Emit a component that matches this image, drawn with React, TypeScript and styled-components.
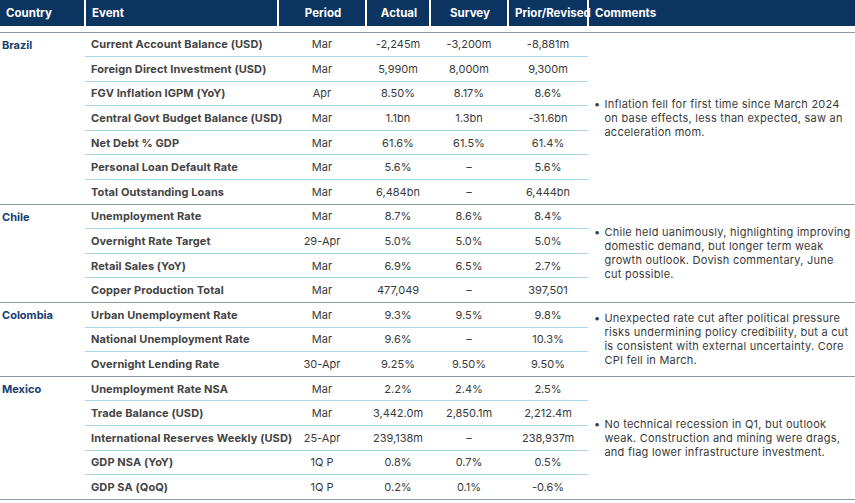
import React from "react";
import styled, { createGlobalStyle } from "styled-components";

const G = createGlobalStyle`
  body { margin: 0; background: #fff; font-family: Inter, "Noto Sans", sans-serif; }
`;

const Table = styled.table`
  width: 855px;
  border-collapse: collapse;
  table-layout: fixed;
  font-size: 11px;
  color: #3a3a3a;
`;

const Th = styled.th<{ $align?: string }>`
  background: #0c3461;
  color: #fff;
  font-weight: 700;
  font-size: 11.5px;
  height: 26px;
  padding: 0 4px 0 6px;
  white-space: nowrap;
  text-align: ${(p) => p.$align || "center"};
  border-left: 2px solid #fff;
  &:first-child { border-left: none; }
`;

const Spacer = styled.tr`
  height: 6px;
  td { border-bottom: 1.5px solid #8a99a8; padding: 0; }
`;

const Tr = styled.tr`
  height: 24.6px;
`;

const Country = styled.td`
  vertical-align: top;
  padding: 5px 2px 0;
  font-weight: 700;
  color: #16406f;
  border-bottom: 1.5px solid #8a99a8;
`;

const Ev = styled.td<{ $last?: boolean }>`
  font-weight: 700;
  color: #444;
  white-space: nowrap;
  letter-spacing: 0.1px;
  padding: 0 0 0 6px;
  border-bottom: ${(p) => (p.$last ? "1.5px solid #8a99a8" : "1.5px solid #a9d8ee")};
`;

const Num = styled.td<{ $last?: boolean }>`
  text-align: center;
  white-space: nowrap;
  padding: 0;
  color: #3a3a3a;
  border-bottom: ${(p) => (p.$last ? "1.5px solid #8a99a8" : "1.5px solid #a9d8ee")};
`;

const Comment = styled.td`
  vertical-align: middle;
  padding: 0 4px 0 6px;
  border-bottom: 1.5px solid #8a99a8;
  line-height: 14px;
  letter-spacing: 0.25px;
`;

const Bullet = styled.div`
  display: flex;
  gap: 4px;
  &::before { content: "•"; }
`;

type R = [string, string, string, string, string];
const groups: { c: string; rows: R[]; comment: string }[] = [
  {
    c: "Brazil",
    comment: "Inflation fell for first time since March 2024 on base effects, less than expected, saw an acceleration mom.",
    rows: [
      ["Current Account Balance (USD)", "Mar", "-2,245m", "-3,200m", "-8,881m"],
      ["Foreign Direct Investment (USD)", "Mar", "5,990m", "8,000m", "9,300m"],
      ["FGV Inflation IGPM (YoY)", "Apr", "8.50%", "8.17%", "8.6%"],
      ["Central Govt Budget Balance (USD)", "Mar", "1.1bn", "1.3bn", "-31.6bn"],
      ["Net Debt % GDP", "Mar", "61.6%", "61.5%", "61.4%"],
      ["Personal Loan Default Rate", "Mar", "5.6%", "–", "5.6%"],
      ["Total Outstanding Loans", "Mar", "6,484bn", "–", "6,444bn"],
    ],
  },
  {
    c: "Chile",
    comment: "Chile held uanimously, highlighting improving domestic demand, but longer term weak growth outlook. Dovish commentary, June cut possible.",
    rows: [
      ["Unemployment Rate", "Mar", "8.7%", "8.6%", "8.4%"],
      ["Overnight Rate Target", "29-Apr", "5.0%", "5.0%", "5.0%"],
      ["Retail Sales (YoY)", "Mar", "6.9%", "6.5%", "2.7%"],
      ["Copper Production Total", "Mar", "477,049", "–", "397,501"],
    ],
  },
  {
    c: "Colombia",
    comment: "Unexpected rate cut after political pressure risks undermining policy credibility, but a cut is consistent with external uncertainty. Core CPI fell in March.",
    rows: [
      ["Urban Unemployment Rate", "Mar", "9.3%", "9.5%", "9.8%"],
      ["National Unemployment Rate", "Mar", "9.6%", "–", "10.3%"],
      ["Overnight Lending Rate", "30-Apr", "9.25%", "9.50%", "9.50%"],
    ],
  },
  {
    c: "Mexico",
    comment: "No technical recession in Q1, but outlook weak. Construction and mining were drags, and flag lower infrastructure investment.",
    rows: [
      ["Unemployment Rate NSA", "Mar", "2.2%", "2.4%", "2.5%"],
      ["Trade Balance (USD)", "Mar", "3,442.0m", "2,850.1m", "2,212.4m"],
      ["International Reserves Weekly (USD)", "25-Apr", "239,138m", "–", "238,937m"],
      ["GDP NSA (YoY)", "1Q P", "0.8%", "0.7%", "0.5%"],
      ["GDP SA (QoQ)", "1Q P", "0.2%", "0.1%", "-0.6%"],
    ],
  },
];

export default function App() {
  return (
    <>
      <G />
      <Table>
        <colgroup>
          <col style={{ width: 85 }} />
          <col style={{ width: 193 }} />
          <col style={{ width: 88 }} />
          <col style={{ width: 64 }} />
          <col style={{ width: 78 }} />
          <col style={{ width: 80 }} />
          <col style={{ width: 267 }} />
        </colgroup>
        <thead>
          <tr>
            <Th $align="left">Country</Th>
            <Th $align="left">Event</Th>
            <Th>Period</Th>
            <Th>Actual</Th>
            <Th>Survey</Th>
            <Th>Prior/Revised</Th>
            <Th $align="left">Comments</Th>
          </tr>
        </thead>
        <tbody>
          <Spacer>
            <td colSpan={7} />
          </Spacer>
          {groups.map((g) =>
            g.rows.map((r, i) => {
              const last = i === g.rows.length - 1;
              return (
                <Tr key={g.c + i}>
                  {i === 0 && <Country rowSpan={g.rows.length}>{g.c}</Country>}
                  <Ev $last={last}>{r[0]}</Ev>
                  <Num $last={last}>{r[1]}</Num>
                  <Num $last={last}>{r[2]}</Num>
                  <Num $last={last}>{r[3]}</Num>
                  <Num $last={last}>{r[4]}</Num>
                  {i === 0 && (
                    <Comment rowSpan={g.rows.length}>
                      <Bullet>{g.comment}</Bullet>
                    </Comment>
                  )}
                </Tr>
              );
            })
          )}
        </tbody>
      </Table>
    </>
  );
}
